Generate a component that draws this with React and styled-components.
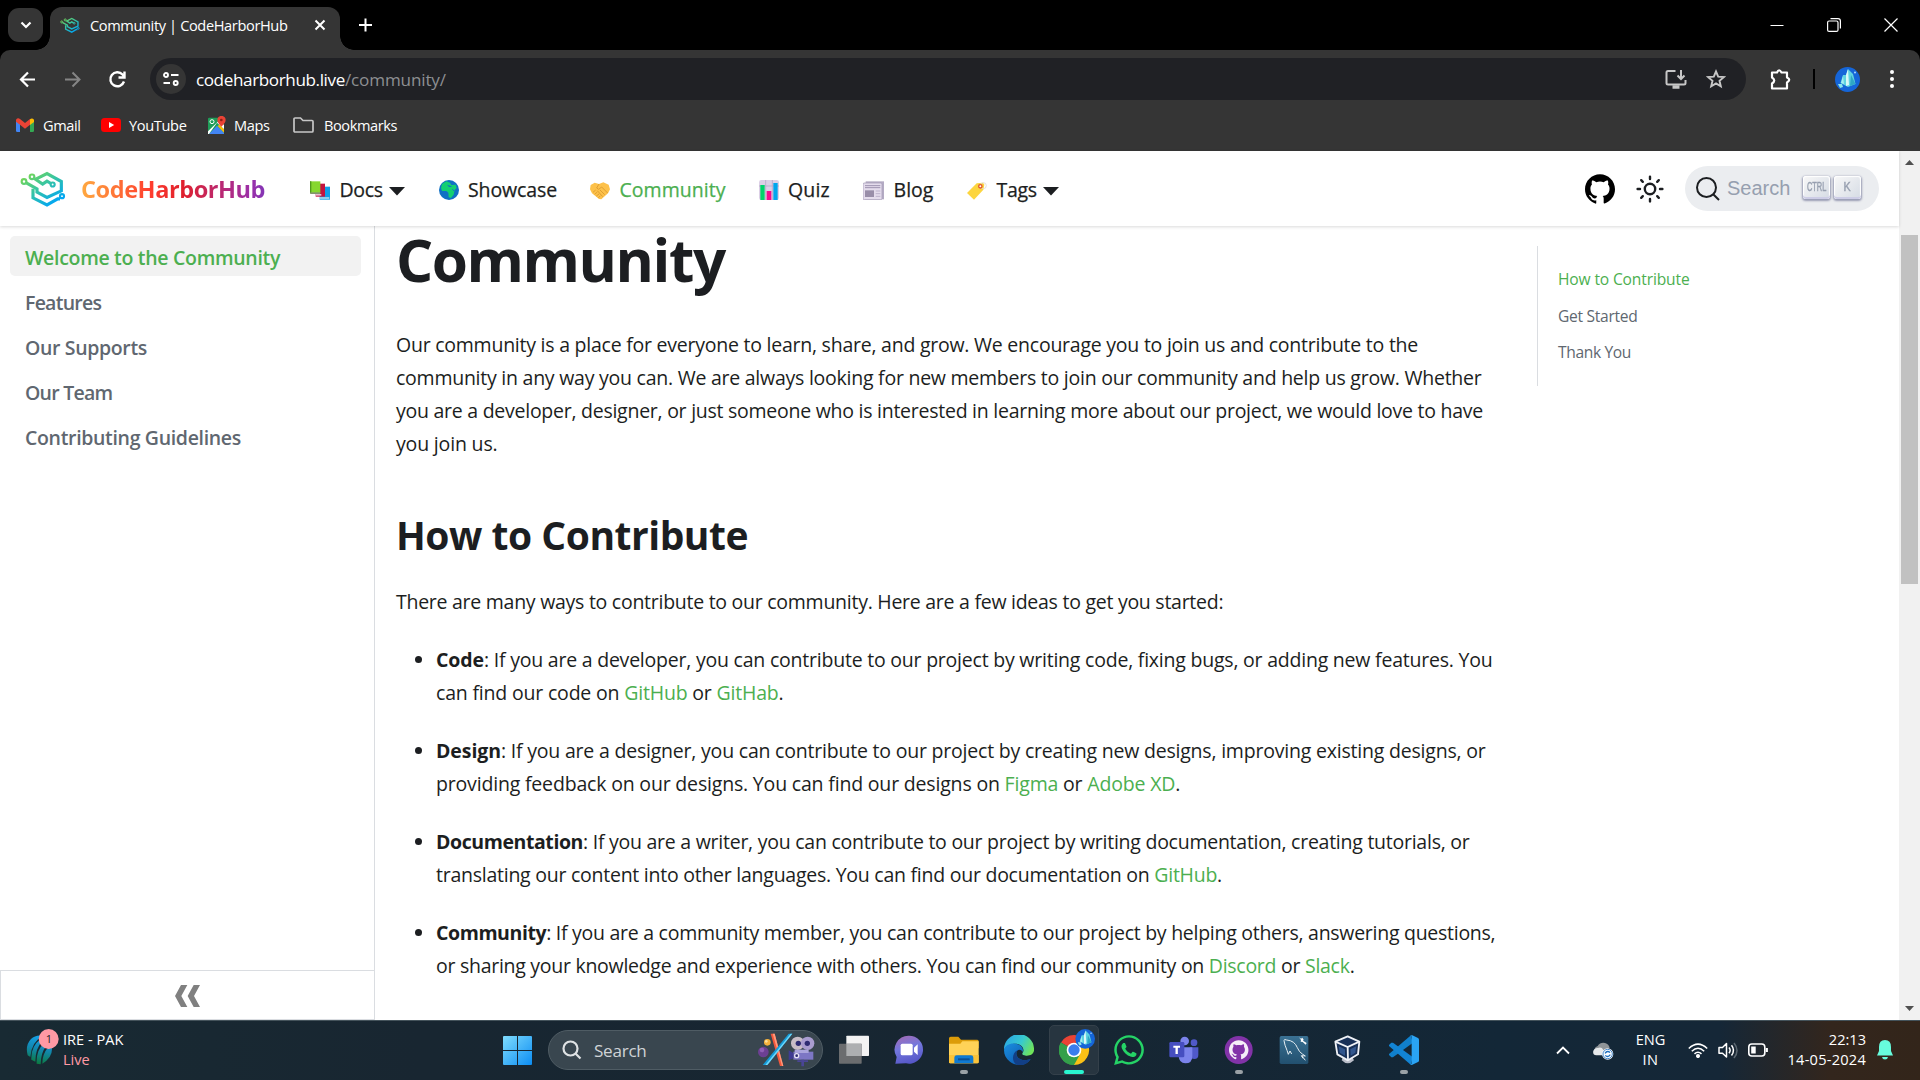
import React from 'react';
import styled, { createGlobalStyle } from 'styled-components';
import { FaWhatsapp } from 'react-icons/fa';

const GlobalStyle = createGlobalStyle`
  * { box-sizing: border-box; }
  body {
    margin: 0;
    background: #fff;
    color: #1c1e21;
    font-family: "Open Sans", "Noto Sans", sans-serif;
    overflow: hidden;
  }
  svg { display: block; flex: none; }
`;

/* ---------- shared ---------- */

const Text = styled.span`
  white-space: nowrap;
  letter-spacing: ${p => p.$ls || 0}px;
`;

const Screen = styled.div`
  width: 1920px;
  height: 1080px;
  display: flex;
  flex-direction: column;
  overflow: hidden;
`;

/* ---------- browser window ---------- */

const TabStrip = styled.div`
  height: 50px;
  flex: none;
  background: #000;
  display: flex;
  align-items: flex-start;
  padding-left: 8px;
`;

const TabSearch = styled.div`
  width: 35px;
  height: 34px;
  margin-top: 8px;
  border-radius: 11px;
  background: #353535;
  display: flex;
  align-items: center;
  justify-content: center;
`;

const Tab = styled.div`
  position: relative;
  width: 290px;
  height: 43px;
  margin: 7px 0 0 7px;
  padding: 0 14px 8px 10px;
  border-radius: 12px 12px 0 0;
  background: #353535;
  color: #fff;
  font-size: 14.6px;
  display: flex;
  align-items: center;
  gap: 10px;

  &::before,
  &::after {
    content: "";
    position: absolute;
    bottom: 0;
    width: 14px;
    height: 14px;
  }
  &::before {
    right: 100%;
    background: radial-gradient(circle at 0 0, transparent 13.5px, #353535 14px);
  }
  &::after {
    left: 100%;
    background: radial-gradient(circle at 100% 0, transparent 13.5px, #353535 14px);
  }
`;

const TabTitle = styled(Text)`
  flex: 1;
`;

const NewTab = styled.div`
  width: 51px;
  height: 50px;
  display: flex;
  align-items: center;
  justify-content: center;
`;

const WindowButtons = styled.div`
  margin-left: auto;
  padding-right: 1px;
  height: 49px;
  display: flex;
`;

const WindowButton = styled.div`
  width: 57px;
  display: flex;
  align-items: center;
  justify-content: center;
`;

const ToolbarBackdrop = styled.div`
  flex: none;
  background: #000;
`;

const Toolbar = styled.div`
  height: 101px;
  border-radius: 10px 10px 0 0;
  background: #353535;
  color: #fff;
`;

const AddressRow = styled.div`
  height: 58px;
  padding: 0 18px 0 17px;
  display: flex;
  align-items: center;
`;

const NavButtons = styled.div`
  width: 133px;
  display: flex;
  gap: 24px;
`;

const AddressBar = styled.div`
  width: 1597px;
  height: 42px;
  padding: 0 20px 0 6px;
  border-radius: 21px;
  background: #202125;
  font-size: 17.1px;
  display: flex;
  align-items: center;
`;

const SiteInfo = styled.div`
  width: 30px;
  height: 30px;
  margin-right: 10px;
  border-radius: 50%;
  background: #353535;
  display: flex;
  align-items: center;
  justify-content: center;
`;

const UrlPath = styled(Text)`
  flex: 1;
  color: #8d8f92;
`;

const AddressActions = styled.div`
  display: flex;
  gap: 19px;
`;

const BrowserActions = styled.div`
  flex: 1;
  padding-left: 23px;
  display: flex;
  align-items: center;
`;

const Separator = styled.div`
  width: 2px;
  height: 20px;
  margin: 0 20px 0 21px;
  background: #000;
`;

const BookmarkBar = styled.div`
  height: 34px;
  padding-left: 16px;
  font-size: 14.6px;
  display: flex;
  align-items: center;
`;

const Bookmark = styled.div`
  width: ${p => p.$w}px;
  display: flex;
  align-items: center;
  gap: ${p => p.$gap || 8}px;
`;

/* ---------- page ---------- */

const Page = styled.div`
  height: 869px;
  flex: none;
  display: flex;
`;

const Site = styled.div`
  width: 1899px;
  display: flex;
  flex-direction: column;
`;

const Navbar = styled.header`
  position: relative;
  z-index: 1;
  height: 75px;
  flex: none;
  padding: 0 20px;
  background: #fff;
  box-shadow: 0 1px 3px rgba(0, 0, 0, 0.15);
  display: flex;
  align-items: center;
`;

const Brand = styled.div`
  width: 290px;
  display: flex;
  align-items: center;
  gap: 15px;
`;

const BrandName = styled(Text)`
  margin-top: 1px;
  font-size: 23.5px;
  font-weight: 700;
  line-height: 34px;
  color: transparent;
  background: linear-gradient(90deg, #ffaa40, #ff3d2e 38%, #e0202c 55%, #9c2fa8 92%, #8335b5);
  background-clip: text;
  -webkit-background-clip: text;
`;

const NavLinks = styled.nav`
  display: flex;
  gap: 33.5px;
`;

const NavLink = styled.a`
  width: ${p => p.$w}px;
  padding-top: 2px;
  color: ${p => (p.$active ? '#4caf50' : '#1c1e21')};
  font-size: 19.5px;
  line-height: 33px;
  -webkit-text-stroke: 0.25px currentColor;
  display: flex;
  align-items: center;
  gap: 9.5px;
`;

const NavEnd = styled.div`
  margin-left: auto;
  display: flex;
  align-items: center;
`;

const SearchButton = styled.div`
  width: 194px;
  height: 45px;
  margin-left: 21px;
  padding: 0 17px 0 11px;
  border-radius: 23px;
  background: #ebedf0;
  color: #969faf;
  font: 20px "Liberation Sans", sans-serif;
  display: flex;
  align-items: center;
`;

const SearchLabel = styled(Text)`
  flex: 1;
  padding-left: 7px;
`;

const Key = styled.kbd`
  width: 27px;
  height: 23px;
  margin: 0 1px 2px 3px;
  padding-bottom: 1px;
  border-radius: 3px;
  background: linear-gradient(-45deg, #d5dbe4, #f8f8f8);
  box-shadow: inset 0 -2px 0 0 #cdcde6, inset 0 0 1px 1px #fff, 0 1px 2px 1px rgba(30, 35, 90, 0.4);
  color: #969faf;
  font: ${p => (p.$small ? '12px' : '12px')} "Liberation Sans", sans-serif;
  -webkit-text-stroke: 0.4px currentColor;
  display: flex;
  align-items: center;
  justify-content: center;
`;

const KeyText = styled.span`
  transform: scaleX(${p => (p.$narrow ? 0.62 : 0.9)});
`;

const Body = styled.div`
  flex: 1;
  min-height: 0;
  display: flex;
`;

const Sidebar = styled.aside`
  width: 375px;
  border-right: 1px solid #dadde1;
  display: flex;
  flex-direction: column;
`;

const Menu = styled.div`
  flex: 1;
  padding: 10px 13px 0 10px;
  display: flex;
  flex-direction: column;
  gap: 5px;
`;

const MenuItem = styled.a`
  height: 40px;
  padding: 3px 15px 0;
  border-radius: 5px;
  background: ${p => (p.$active ? '#f2f2f2' : 'transparent')};
  color: ${p => (p.$active ? '#4caf50' : '#606770')};
  font-size: 19.5px;
  font-weight: 600;
  display: flex;
  align-items: center;
`;

const CollapseButton = styled.div`
  height: 50px;
  padding-top: 2px;
  border: 1px solid #dadde1;
  border-right: 0;
  display: flex;
  align-items: center;
  justify-content: center;
`;

const Article = styled.article`
  width: 1162px;
  padding-left: 21px;
  font-size: 19.5px;
  line-height: 33px;
`;

const Title = styled.h1`
  margin: 1px 0 0;
  font-size: 58.5px;
  line-height: 65px;
  letter-spacing: -1.45px;
`;

const Heading = styled.h2`
  margin: 50px 0 0;
  font-size: 39px;
  line-height: 50px;
  letter-spacing: -0.48px;
`;

const Paragraph = styled.p`
  margin: ${p => p.$top}px 0 0;
`;

const Line = styled(Text)`
  display: block;
`;

const List = styled.ul`
  margin: 25px 0 0;
  padding-left: 40px;
  display: flex;
  flex-direction: column;
  gap: 25px;
`;

const Bold = styled.strong`
  letter-spacing: ${p => p.$ls}px;
`;

const Link = styled.a`
  color: #4caf50;
`;

const Toc = styled.ul`
  width: 340px;
  height: 140px;
  margin: 20px 0 0;
  padding: 18px 0 0 20px;
  border-left: 1px solid #dadde1;
  list-style: none;
  color: #606770;
  font-size: 15.6px;
`;

const TocItem = styled.li`
  height: 36.5px;
  line-height: 30px;
  color: ${p => (p.$active ? '#4caf50' : 'inherit')};
`;

const Scrollbar = styled.div`
  width: 21px;
  padding: 9px 2px 9px;
  background: #f1f1f1;
  display: flex;
  flex-direction: column;
  align-items: center;
`;

const Thumb = styled.div`
  width: 17px;
  height: 349px;
  margin: 70px 0 auto;
  background: #c1c1c1;
`;

/* ---------- taskbar ---------- */

const Taskbar = styled.footer`
  height: 60px;
  flex: none;
  border-top: 1px solid #44535b;
  background: linear-gradient(90deg, #182a33 0, #182631 420px, #172632 1000px, #132737 1500px, #152737 1720px, #33261d 1830px, #33251a 1920px);
  color: #fff;
  font-size: 14.6px;
  line-height: 20px;
  display: flex;
`;

const Widget = styled.div`
  width: 500px;
  padding: 8px 0 0 26px;
  display: flex;
  gap: 4px;
`;

const Stack = styled.div`
  width: ${p => p.$w}px;
  display: flex;
  flex-direction: column;
  align-items: ${p => p.$align || 'flex-start'};
`;

const Live = styled(Text)`
  color: #ff99a4;
`;

const TaskSearch = styled.div`
  width: 275px;
  height: 40px;
  margin: 9px 4px 0 13px;
  padding: 0 7px 0 13px;
  border: 1px solid #4f5c64;
  border-radius: 20px;
  background: #39464f;
  color: #cfd3d6;
  font-size: 17.1px;
  display: flex;
  align-items: center;
`;

const TaskSearchLabel = styled(Text)`
  flex: 1;
  padding: 1px 0 0 12px;
`;

const StartButton = styled.div`
  width: 35px;
  padding: 15px 0 0 3px;
`;

const AppButton = styled.div`
  width: 50px;
  height: 50px;
  margin: 4px 0 0 ${p => (p.$first ? 2 : 5)}px;
  padding-top: 9px;
  border-radius: 5px;
  border: 1px solid ${p => (p.$active ? '#34404a' : 'transparent')};
  background: ${p => (p.$active ? '#273540' : 'transparent')};
  display: flex;
  flex-direction: column;
  align-items: center;
  justify-content: space-between;
`;

const IconSlot = styled.div`
  height: 30px;
  margin-left: ${p => (p.$wide ? 6 : 0)}px;
  display: flex;
  align-items: flex-end;
`;

const Indicator = styled.div`
  width: ${p => (p.$active ? 20 : 8)}px;
  height: 4px;
  border-radius: 2px;
  background: ${p => (p.$active ? '#29f5cf' : p.$open ? '#9aa1a6' : 'transparent')};
`;

const Tray = styled.div`
  margin-left: auto;
  padding: 8px 27px 0 0;
  display: flex;
`;

const TrayIcon = styled.div`
  width: ${p => p.$w}px;
  height: 42px;
  margin-left: ${p => p.$left || 0}px;
  display: flex;
  align-items: center;
`;

/* ---------- drawings ---------- */

const LogoMark = ({ width, height, id }) => (
  <svg width={width} height={height} viewBox="60 511 138 110" fill="none">
    <defs>
      <linearGradient id={id} gradientUnits="userSpaceOnUse" x1="80" y1="515" x2="150" y2="620">
        <stop offset="0" stopColor="#7fd84a" />
        <stop offset=".45" stopColor="#3cc79c" />
        <stop offset="1" stopColor="#00a6f5" />
      </linearGradient>
    </defs>
    <g stroke={`url(#${id})`} strokeWidth="9.5" strokeLinejoin="miter">
      <path d="M109 537 L141 521 L184 545 V573 L141 593 L111 577 V567 L79 549" />
      <path d="M103 536 L128 553 L141 544 L153 551" />
      <path d="M99 567 V594 L141 615 L173 597 H180" />
      <circle cx="72" cy="545" r="7" strokeWidth="6.500" />
      <circle cx="96" cy="531" r="7" strokeWidth="6.500" />
      <circle cx="158" cy="554" r="6" strokeWidth="6.500" />
      <circle cx="186" cy="589" r="6" strokeWidth="6.500" />
    </g>
  </svg>
);

const CrystalShapes = () => (
  <>
    <circle cx="12.5" cy="12.5" r="12.5" fill="#1565d8" />
    <path d="M13 2 L18 7 L20.5 17 L13 20 L5.5 16 L8 8 L11 8 Z" fill="#5fd3e0" />
    <path d="M13 2 L14 18 L11 19 L11 8 Z" fill="#d9f8f8" />
    <path d="M16 8 L20.5 17 L15 19 Z" fill="#2fa7c4" />
    <path d="M8 9 L9 17 L6 16 Z" fill="#a7eef0" />
    <path d="M3 17 L7 17 L8 20 L5 21 Z" fill="#8be6ea" />
    <circle cx="20" cy="5.5" r="1" fill="#a9d8ff" />
  </>
);

const Crystal = ({ size }) => (
  <svg width={size} height={size} viewBox="0 0 25 25"><CrystalShapes /></svg>
);

const CaretSvg = styled.svg`
  margin: 3px 0 0 -3.5px;
`;

const Caret = () => (
  <CaretSvg width="16" height="9" viewBox="0 0 16 9"><path d="M0 0 H16 L8 8.5 Z" fill="#1c1e21" /></CaretSvg>
);

const BooksIcon = () => (
  <svg width="20" height="20" viewBox="0 0 60 60">
    <path d="M29 20 H60 V59 H29 Z" fill="#0f9fe8" /><path d="M29 52 H58 V56 H29 Z" fill="#cfe6f2" />
    <path d="M17 11 H45 V50 H17 Z" fill="#c2143f" /><path d="M17 42 H34 V47 H17 Z" fill="#e3bfd0" />
    <path d="M0 4 H31 V40 H0 Z" fill="#86d72f" /><path d="M0 4 H4 V40 H0 Z" fill="#4f9a1c" /><path d="M1 37 H30 V42 H1 Z" fill="#83936f" />
  </svg>
);

const GlobeIcon = () => (
  <svg width="20" height="20" viewBox="0 0 60 60">
    <circle cx="30" cy="30" r="30" fill="#0f70c4" />
    <path d="M9 12 L22 4 L33 8 L37 15 L50 14 L53 24 L47 30 L44 44 L36 54 L29 52 L28 38 L22 33 L9 33 L6 24 Z" fill="#12cf72" />
    <path d="M24 14 L33 17 L40 21 L30 21 Z" fill="#0f70c4" /><path d="M40 28 L46 33" stroke="#0f70c4" strokeWidth="3" />
  </svg>
);

const HandshakeIcon = () => (
  <svg width="20" height="20" viewBox="0 0 60 60">
    <path d="M2 15 L14 8 L27 12 L40 7 L56 14 L60 28 L54 40 L34 58 L27 57 L6 40 L0 28 Z" fill="#fdc14a" />
    <path d="M27 12 L20 24 L26 28 L35 21 L53 39 M30 30 L44 44 M22 32 L38 50 M9 37 L17 30 M14 43 L22 36 M19 48 L27 42 M25 53 L31 48" stroke="#d9982c" strokeWidth="2.500" fill="none" />
  </svg>
);

const ChartIcon = () => (
  <svg width="20" height="20" viewBox="0 0 60 60">
    <rect width="60" height="60" rx="7" fill="#dccfe6" />
    <path d="M20 0 V60 M40 0 V60 M0 18 H60" stroke="#b7a8c6" strokeWidth="2.5" />
    <rect x="4" y="15" width="13" height="45" fill="#00d26a" /><rect x="23" y="33" width="14" height="27" fill="#f70a8d" /><rect x="43" y="9" width="13" height="51" fill="#00a6ed" />
  </svg>
);

const NewsIcon = () => (
  <svg width="21" height="20" viewBox="0 0 63 60">
    <path d="M8 4 H63 V58 H8 Z" fill="#b4abc4" />
    <rect y="9" width="57" height="50" rx="4" fill="#e4dcec" stroke="#aaa0bb" strokeWidth="2.5" />
    <path d="M6 17 H52 M6 23 H52" stroke="#9d91b0" strokeWidth="3" /><rect x="6" y="31" width="27" height="20" fill="#998ea9" />
    <path d="M38 33 H52 M38 41 H52 M38 49 H52" stroke="#bdb2cc" strokeWidth="3" />
  </svg>
);

const TagIcon = () => (
  <svg width="20" height="20" viewBox="0 0 60 60">
    <path d="M0 39 L29 10 L48 8 L52 14 L49 29 L21 59 Z" fill="#fcd53f" />
    <circle cx="49" cy="17" r="9" fill="none" stroke="#dedbd4" strokeWidth="2.5" />
    <circle cx="40" cy="19" r="5" fill="#fff" stroke="#e2572b" strokeWidth="4" />
  </svg>
);

const githubPath = 'M12 .297c-6.63 0-12 5.373-12 12 0 5.303 3.438 9.8 8.205 11.385.6.113.82-.258.82-.577 0-.285-.01-1.04-.015-2.04-3.338.724-4.042-1.61-4.042-1.61C4.422 18.07 3.633 17.7 3.633 17.7c-1.087-.744.084-.729.084-.729 1.205.084 1.838 1.236 1.838 1.236 1.07 1.835 2.809 1.305 3.495.998.108-.776.417-1.305.76-1.605-2.665-.3-5.466-1.332-5.466-5.93 0-1.31.465-2.38 1.235-3.22-.135-.303-.54-1.523.105-3.176 0 0 1.005-.322 3.3 1.23.96-.267 1.98-.399 3-.405 1.02.006 2.04.138 3 .405 2.28-1.552 3.285-1.23 3.285-1.23.645 1.653.24 2.873.12 3.176.765.84 1.23 1.91 1.23 3.22 0 4.61-2.805 5.625-5.475 5.92.42.36.81 1.096.81 2.22 0 1.606-.015 2.896-.015 3.286 0 .315.21.69.825.57C20.565 22.092 24 17.592 24 12.297c0-6.627-5.373-12-12-12';

const GithubMark = () => (
  <svg width="30" height="30" viewBox="0 0 24 24"><path d={githubPath} fill="#000" /></svg>
);

const SunSvg = styled.svg`
  margin-left: 21px;
`;

const SunIcon = () => (
  <SunSvg width="28" height="28" viewBox="0 0 28 28" fill="none" stroke="#1c1e21" strokeWidth="2.4" strokeLinecap="round">
    <circle cx="14" cy="14" r="5.2" />
    <path d="M14 1.6V4M14 24v2.4M1.6 14H4M24 14h2.4M5.2 5.2l1.6 1.6M21.2 21.2l1.6 1.6M22.8 5.2l-1.6 1.6M6.8 21.2l-1.6 1.6" />
  </SunSvg>
);

const GmailIcon = () => (
  <svg width="18" height="14" viewBox="0 0 54 42">
    <path d="M0 6 L12 15 V42 H4 Q0 42 0 38Z" fill="#4285f4" /><path d="M54 6 L42 15 V42 H50 Q54 42 54 38Z" fill="#34a853" />
    <path d="M42 4 Q48 -2 54 5 V12 L42 21Z" fill="#fbbc04" /><path d="M0 5 Q5 -2 12 3 L27 15 L42 3 V20 L27 32 L12 20 L0 11Z" fill="#ea4335" />
  </svg>
);

const YouTubeIcon = () => (
  <svg width="20" height="14" viewBox="0 0 20 14"><rect width="20" height="14" rx="3.5" fill="#f00" /><path d="M8 4 L13.2 7 L8 10Z" fill="#fff" /></svg>
);

const MapsIcon = () => (
  <svg width="19" height="18" viewBox="0 0 57 54">
    <rect y="5" width="48" height="49" rx="4" fill="#1f9d58" /><path d="M3 54 L27 29 L48 50 V54Z" fill="#4285f4" /><path d="M0 46 L34 13 L48 27 V40 L27 20 L3 54H0Z" fill="#fff" />
    <path d="M34 26 L48 40 V50 L29 30Z" fill="#fbbc04" /><circle cx="12" cy="17" r="6" fill="none" stroke="#fff" strokeWidth="3" />
    <path d="M40 32 Q28 20 28 12 A12 12 0 0 1 53 12 Q53 20 40 32Z" fill="#ea4335" /><circle cx="40" cy="12" r="4" fill="#8d1f17" />
  </svg>
);

const WinStart = () => (
  <svg width="29" height="29" viewBox="0 0 29 29">
    <defs><linearGradient id="win" gradientUnits="userSpaceOnUse" x1="0" y1="0" x2="29" y2="29"><stop offset="0" stopColor="#7fdcfd" /><stop offset="1" stopColor="#0c8df3" /></linearGradient></defs>
    <path d="M1 0H14V14H0V1Q0 0 1 0ZM15 0H28Q29 0 29 1V14H15ZM0 15H14V29H1Q0 29 0 28ZM15 15H29V28Q29 29 28 29H15Z" fill="url(#win)" />
  </svg>
);

const SearchArt = () => (
  <svg width="57" height="34" viewBox="0 0 171 102">
    <path d="M38 2 L50 2 L76 99 L66 99Z" fill="#f4583c" /><path d="M44 2 L50 2 L76 99 L72 99Z" fill="#ff9a7c" />
    <path d="M92 2 L103 2 L28 96 L14 96Z" fill="#159bd8" /><path d="M98 2 L103 2 L28 96 L22 96Z" fill="#6fd8fa" />
    <circle cx="28" cy="28" r="10" fill="#f5b13c" /><circle cx="25" cy="25" r="4" fill="#ffe09a" /><circle cx="16" cy="57" r="16" fill="#6c3f93" /><circle cx="12" cy="51" r="7" fill="#8f5fb5" />
    <circle cx="119" cy="31" r="20" fill="#c8bcc6" /><circle cx="149" cy="31" r="20" fill="#a99ccf" />
    <circle cx="121" cy="31" r="8" fill="#2e2b72" /><circle cx="148" cy="31" r="8" fill="#2e2b72" />
    <path d="M106 56 H166 V80 H106Z" fill="#7d76c4" /><path d="M110 50 H152 V60 H110Z" fill="#aaa4dc" /><path d="M92 52 L106 60 V76 L92 82Z" fill="#3f3b92" /><circle cx="116" cy="68" r="8" fill="#e6e4f5" /><circle cx="116" cy="68" r="4" fill="#2e2b72" />
    <path d="M130 80 H138 V100 H130Z M118 82 H150 V87 H118Z" fill="#4a4596" />
  </svg>
);

const TaskViewIcon = () => (
  <svg width="30" height="30" viewBox="0 0 90 90"><rect x="22" y="2" width="68" height="61" rx="2" fill="#f3f3f3" /><rect y="26" width="68" height="60" rx="2" fill="#6b6d6f" /><path d="M22 26H68V63H22Z" fill="#adafb1" /></svg>
);

const ChatIcon = () => (
  <svg width="30" height="30" viewBox="0 0 90 90">
    <defs><linearGradient id="chat" x1="0.2" y1="0" x2="0.5" y2="1"><stop offset="0" stopColor="#a26bb5" /><stop offset=".45" stopColor="#7377dd" /><stop offset="1" stopColor="#5657c8" /></linearGradient></defs>
    <path d="M45 2 A42 42 0 1 1 36 85 L4 86 L8 66 A42 42 0 0 1 45 2Z" fill="url(#chat)" /><rect x="20" y="26" width="36" height="35" rx="5" fill="#fff" /><path d="M60 38 L71 28 V60 L60 50Z" fill="#fff" />
  </svg>
);

const FolderIcon = () => (
  <svg width="30" height="30" viewBox="0 0 90 90">
    <path d="M0 10 Q0 5 5 5 H28 L36 14 H85 Q89 14 89 19 V40 H0Z" fill="#dc9c09" /><path d="M0 26 H34 L40 19 H89 V81 Q89 85 85 85 H4 Q0 85 0 81Z" fill="#ffd257" /><path d="M0 60H89V81Q89 85 85 85H4Q0 85 0 81Z" fill="#fbc339" />
    <path d="M16 85 V68 Q16 61 23 61 H66 Q73 61 73 68 V85Z" fill="#0f7ad3" /><path d="M27 70H62V76H27Z" fill="#0a4f96" />
  </svg>
);

const EdgeIcon = () => (
  <svg width="30" height="30" viewBox="0 0 90 90">
    <defs>
      <linearGradient id="edgeTop" x1="0" y1=".2" x2="1" y2=".6"><stop offset="0" stopColor="#2aa5e4" /><stop offset=".55" stopColor="#37c9d0" /><stop offset="1" stopColor="#6fe35a" /></linearGradient>
      <linearGradient id="edgeBottom" x1="0" y1="0" x2="1" y2="1"><stop offset="0" stopColor="#1a8fe0" /><stop offset="1" stopColor="#0c4fa5" /></linearGradient>
    </defs>
    <path d="M0 45 A45 45 0 0 1 90 40 C92 56 80 63 66 62 C54 61 53 57 57 52 C62 42 54 27 36 26 C18 26 4 34 0 45Z" fill="url(#edgeTop)" />
    <path d="M0 45 C4 30 18 24 34 26 C52 28 60 42 56 51 C50 40 37 44 37 56 C38 74 62 80 80 72 C68 94 38 95 18 80 C6 71 0 60 0 45Z" fill="url(#edgeBottom)" />
    <path d="M37 56 C38 74 62 80 80 72 C68 92 44 94 36 88 C22 78 24 50 44 44 C39 47 37 51 37 56Z" fill="#123f86" />
  </svg>
);

const ChromeIcon = () => (
  <svg width="36" height="36" viewBox="0 0 108 108">
    <path d="M45 63 L6 40.500 A45 45 0 0 1 84 40.500 Z" fill="#ea4335" />
    <path d="M45 63 L84 40.500 A45 45 0 0 1 45 108Z" fill="#fbc116" /><path d="M45 63 L45 108 A45 45 0 0 1 6 40.500Z" fill="#34a04a" /><path d="M45 43H84L90 63L60 76Z" fill="#fbc116" />
    <path d="M6 40 L25 74 L45 84 L62 78 L45 108 A45 45 0 0 1 6 40Z" fill="#34a04a" />
    <circle cx="45" cy="63" r="22" fill="#fff" /><circle cx="45" cy="63" r="17" fill="#3b7ded" />
    <g transform="translate(49 0) scale(2.360)"><CrystalShapes /></g>
  </svg>
);

const WhatsappMark = styled(FaWhatsapp)`
  margin: -2px;
  color: #25d366;
`;

const WhatsappIcon = () => <WhatsappMark size={34} />;

const TeamsIcon = () => (
  <svg width="30" height="30" viewBox="0 0 90 90">
    <circle cx="75" cy="23" r="10" fill="#5059c9" /><path d="M62 37H88V60Q88 72 76 72Q66 72 62 66Z" fill="#5059c9" />
    <circle cx="47" cy="18" r="13" fill="#7b83eb" /><path d="M30 37H70V62Q70 85 49 85Q30 84 29 64Z" fill="#7b83eb" />
    <rect x="1" y="21" width="45" height="46" rx="4" fill="#464ec0" /><path d="M13 32H33V38H26.500V57H19.500V38H13Z" fill="#fff" />
  </svg>
);

const GithubDesktopIcon = () => (
  <svg width="30" height="30" viewBox="0 0 90 90"><circle cx="44" cy="45" r="42" fill="#8233a8" /><g transform="translate(15 15) scale(2.430)"><path d={githubPath} fill="#f5eef8" /></g></svg>
);

const MysqlIcon = () => (
  <svg width="30" height="30" viewBox="0 0 90 90">
    <defs><linearGradient id="sql" x1="0" y1="0" x2="0" y2="1"><stop offset="0" stopColor="#3a7193" /><stop offset="1" stopColor="#22506f" /></linearGradient></defs>
    <rect x="2" y="3" width="86" height="84" rx="5" fill="url(#sql)" />
    <path d="M28 58 L24 46 Q17 30 15 17 Q15 11 23 15 Q47 17 55 38 Q61 52 70 57 L79 63 L68 62 L79 76 M28 58 L33 48 L38 57 M67 62 L72 70" stroke="#e8f0f4" strokeWidth="3" fill="none" />
    <path d="M60 7 L66 11 L70 8 L74 14 L72 17 L83 24 L80 29 L71 21 L65 20 L66 15Z" fill="#fff" />
  </svg>
);

const CubeIcon = () => (
  <svg width="30" height="30" viewBox="4 0 90 90">
    <path d="M27 76 Q45 94 64 76 L60 68 H30Z" fill="#b9bdc8" />
    <path d="M45 4 L80 20 L76 58 L46 76 L14 58 L8 20Z" fill="#173057" stroke="#eef1f6" strokeWidth="5.500" strokeLinejoin="round" />
    <path d="M8 20 L45 36 L80 20 M45 36 L46 76" stroke="#eef1f6" strokeWidth="5.500" fill="none" /><path d="M18 34L37 43V62L21 53Z M53 43L71 34L68 53L54 62Z" fill="#31568d" />
  </svg>
);

const CodeIcon = () => (
  <svg width="30" height="30" viewBox="0 0 90 90">
    <path d="M66 1 L71 24 L12 67 L7 67 L0 60 V57Z" fill="#1080cc" /><path d="M7 23 L12 23 L71 66 L66 90 L0 33 V30Z" fill="#1284d4" />
    <path d="M64 2 Q67 0 70 1 L87 9 Q90 11 90 14 V77 Q90 80 87 81 L70 89 Q67 91 64 88 Q68 89 68 84 V7 Q68 1 64 2Z" fill="#2aa4f4" />
  </svg>
);

const SportsIcon = () => (
  <svg width="33" height="38" viewBox="0 0 99 114">
    <defs><linearGradient id="ball" x1="0.6" y1="0" x2="0.4" y2="1"><stop offset="0" stopColor="#15a4ec" /><stop offset=".45" stopColor="#1288b4" /><stop offset="1" stopColor="#0b7a3b" /></linearGradient></defs>
    <path d="M5 79 Q-3 49 15 30 Q28 17 50 20 Q16 39 13 84Z M16 92 Q14 52 44 30 L50 36 Q28 57 28 98Z M32 104 Q30 62 54 44 L61 50 Q44 72 44 106Z M49 104 Q49 75 67 54 L78 56 Q80 86 49 104Z" fill="url(#ball)" />
    <circle cx="68" cy="30" r="30" fill="#ff99a4" />
    <text x="69" y="41" textAnchor="middle" fontSize="33" fontFamily="Open Sans, sans-serif" fill="#232329">1</text>
  </svg>
);

const stroke = { fill: 'none', stroke: '#fff', strokeWidth: 2 };

/* ---------- content ---------- */

const navItems = [
  { label: 'Docs', icon: BooksIcon, w: 95, ls: -0.3, caret: true },
  { label: 'Showcase', icon: GlobeIcon, w: 118, ls: -0.1 },
  { label: 'Community', icon: HandshakeIcon, w: 135, ls: 0.035, active: true },
  { label: 'Quiz', icon: ChartIcon, w: 71, ls: 0.15 },
  { label: 'Blog', icon: NewsIcon, w: 70.5, ls: 0.04 },
  { label: 'Tags', icon: TagIcon, w: 91.5, ls: -0.3, caret: true },
];

const menuItems = [
  { label: 'Welcome to the Community', ls: -0.31, active: true },
  { label: 'Features', ls: -0.75 },
  { label: 'Our Supports', ls: -0.35 },
  { label: 'Our Team', ls: -0.75 },
  { label: 'Contributing Guidelines', ls: -0.33 },
];

const intro = [
  ['Our community is a place for everyone to learn, share, and grow. We encourage you to join us and contribute to the', -0.239],
  ['community in any way you can. We are always looking for new members to join our community and help us grow. Whether', -0.245],
  ['you are a developer, designer, or just someone who is interested in learning more about our project, we would love to have', -0.257],
  ['you join us.', -0.167],
];

const ideas = [
  {
    name: 'Code', nameLs: -0.1, ls: [-0.22, -0.187],
    first: ': If you are a developer, you can contribute to our project by writing code, fixing bugs, or adding new features. You',
    second: <>can find our code on <Link>GitHub</Link> or <Link>GitHab</Link>.</>,
  },
  {
    name: 'Design', nameLs: -0.07, ls: [-0.206, -0.18],
    first: ': If you are a designer, you can contribute to our project by creating new designs, improving existing designs, or',
    second: <>providing feedback on our designs. You can find our designs on <Link>Figma</Link> or <Link>Adobe XD</Link>.</>,
  },
  {
    name: 'Documentation', nameLs: -0.415, ls: [-0.251, -0.251],
    first: ': If you are a writer, you can contribute to our project by writing documentation, creating tutorials, or',
    second: <>translating our content into other languages. You can find our documentation on <Link>GitHub</Link>.</>,
  },
  {
    name: 'Community', nameLs: -0.42, ls: [-0.27, -0.275],
    first: ': If you are a community member, you can contribute to our project by helping others, answering questions,',
    second: <>or sharing your knowledge and experience with others. You can find our community on <Link>Discord</Link> or <Link>Slack</Link>.</>,
  },
];

const apps = [
  { name: 'taskview', icon: TaskViewIcon },
  { name: 'chat', icon: ChatIcon },
  { name: 'files', icon: FolderIcon, open: true },
  { name: 'edge', icon: EdgeIcon },
  { name: 'chrome', icon: ChromeIcon, active: true },
  { name: 'whatsapp', icon: WhatsappIcon },
  { name: 'teams', icon: TeamsIcon },
  { name: 'github', icon: GithubDesktopIcon, open: true },
  { name: 'mysql', icon: MysqlIcon },
  { name: 'virtualbox', icon: CubeIcon },
  { name: 'vscode', icon: CodeIcon, open: true },
];

const Browser = () => (
  <>
    <TabStrip>
      <TabSearch><svg width="12" height="8" viewBox="0 0 12 8" {...stroke} strokeWidth="2.2"><path d="M1.500 1.500 L6 6 L10.500 1.500" /></svg></TabSearch>
      <Tab>
        <LogoMark width={20} height={18} id="tabLogo" />
        <TabTitle $ls={-0.378}>Community | CodeHarborHub</TabTitle>
        <svg width="12" height="12" viewBox="0 0 12 12" {...stroke}><path d="M1.500 1.500 L10.500 10.500 M10.500 1.500 L1.500 10.500" /></svg>
      </Tab>
      <NewTab><svg width="13" height="14" viewBox="0 0 13 14" {...stroke}><path d="M6.500 .5V13.500 M0 7H13" /></svg></NewTab>
      <WindowButtons>
        <WindowButton><svg width="14" height="14" viewBox="0 0 14 14" {...stroke} strokeWidth="1"><path d="M.5 7.500H13.500" /></svg></WindowButton>
        <WindowButton><svg width="14" height="14" viewBox="0 0 14 14" {...stroke} strokeWidth="1.200"><rect x=".6" y="3" width="10.400" height="10.400" rx="1.500" /><path d="M3.500 .7H11Q13.400 .7 13.400 3V10.500" /></svg></WindowButton>
        <WindowButton><svg width="14" height="14" viewBox="0 0 14 14" {...stroke} strokeWidth="1.200"><path d="M.5 .5L13.500 13.500M13.500 .5L.5 13.500" /></svg></WindowButton>
      </WindowButtons>
    </TabStrip>
    <ToolbarBackdrop>
      <Toolbar>
        <AddressRow>
          <NavButtons>
            <svg width="21" height="21" viewBox="0 0 21 21" {...stroke} strokeWidth="2.200"><path d="M18 10.500H4M11 3.500L4 10.500L11 17.500" /></svg>
            <svg width="21" height="21" viewBox="0 0 21 21" {...stroke} stroke="#858585"><path d="M3 10.500H17M10.500 3.500L17.500 10.500L10.500 17.500" /></svg>
            <svg width="21" height="21" viewBox="0 0 21 21" {...stroke} strokeWidth="2.400"><path d="M17 12.500A7 7 0 1 1 15.500 5.500L17.500 8M17.500 2.500V8.500H11.500" /></svg>
          </NavButtons>
          <AddressBar>
            <SiteInfo>
              <svg width="16" height="14" viewBox="0 0 16 14" {...stroke} strokeWidth="1.900"><circle cx="3" cy="3" r="2" /><path d="M8 3H15.500M.5 11H7" /><circle cx="12.700" cy="11" r="2" /></svg>
            </SiteInfo>
            <Text $ls={-0.384}>codeharborhub.live</Text>
            <UrlPath $ls={-0.146}>/community/</UrlPath>
            <AddressActions>
              <svg width="22" height="20" viewBox="0 0 22 20" fill="none" stroke="#c7c7c7" strokeWidth="2"><path d="M10.500 2H3Q1.500 2 1.500 3.500V14Q1.500 15.500 3 15.500H19Q20.500 15.500 20.500 14V11M16 1V9M12.500 6.500L16 10L19.500 6.500" /><path d="M7.500 18H14.500" strokeWidth="3.500" /></svg>
              <svg width="20" height="20" viewBox="0 0 20 20" fill="none" stroke="#c7c7c7" strokeWidth="1.900"><path d="M10 2.500L12.200 7.600L17.800 8.100L13.500 11.800L14.800 17.300L10 14.400L5.200 17.300L6.500 11.800L2.200 8.100L7.800 7.600Z" /></svg>
            </AddressActions>
          </AddressBar>
          <BrowserActions>
            <svg width="23" height="23" viewBox="0 0 23 23" {...stroke} strokeWidth="2.200"><path d="M3 4.500H8Q10 0 12.500 4.500H18V9.500Q22.500 11.500 18 14.500V20.500H3V15.500Q7.500 12.500 3 9.500Z" strokeLinejoin="round" /></svg>
            <Separator />
            <Crystal size={25} />
            <Kebab width="20" height="20" viewBox="0 0 20 20" fill="#fff"><circle cx="10" cy="3" r="2" /><circle cx="10" cy="10" r="2" /><circle cx="10" cy="17" r="2" /></Kebab>
          </BrowserActions>
        </AddressRow>
        <BookmarkBar>
          <Bookmark $w={85} $gap={9}><GmailIcon /><Text $ls={-0.42}>Gmail</Text></Bookmark>
          <Bookmark $w={107}><YouTubeIcon /><Text $ls={-0.36}>YouTube</Text></Bookmark>
          <Bookmark $w={85} $gap={7}><MapsIcon /><Text $ls={-0.41}>Maps</Text></Bookmark>
          <Bookmark $w={110} $gap={10}>
            <svg width="21" height="16" viewBox="0 0 21 16" fill="none" stroke="#c7c7c7" strokeWidth="1.700"><path d="M1 2Q1 1 2 1H7.500L10 3.500H19Q20 3.500 20 4.500V14Q20 15 19 15H2Q1 15 1 14Z" /></svg>
            <Text $ls={-0.43}>Bookmarks</Text>
          </Bookmark>
        </BookmarkBar>
      </Toolbar>
    </ToolbarBackdrop>
  </>
);

const Kebab = styled.svg`
  margin-left: 22px;
`;

export default function App() {
  return (
    <Screen>
      <GlobalStyle />
      <Browser />
      <Page>
        <Site>
          <Navbar>
            <Brand>
              <LogoMark width={46} height={37} id="brandLogo" />
              <BrandName $ls={-0.42}>CodeHarborHub</BrandName>
            </Brand>
            <NavLinks>
              {navItems.map(({ label, icon: Icon, w, ls, caret, active }) => (
                <NavLink key={label} $w={w} $active={active}>
                  <Icon /><Text $ls={ls}>{label}</Text>{caret && <Caret />}
                </NavLink>
              ))}
            </NavLinks>
            <NavEnd>
              <GithubMark />
              <SunIcon />
              <SearchButton>
                <svg width="24" height="24" viewBox="0 0 24 24" fill="none" stroke="#1c1e21" strokeWidth="2"><circle cx="10.500" cy="10.500" r="9.500" /><path d="M17.200 17.200L23 23" /></svg>
                <SearchLabel>Search</SearchLabel>
                <Key $small><KeyText $narrow>CTRL</KeyText></Key>
                <Key><KeyText>K</KeyText></Key>
              </SearchButton>
            </NavEnd>
          </Navbar>
          <Body>
            <Sidebar>
              <Menu>
                {menuItems.map(m => <MenuItem key={m.label} $active={m.active}><Text $ls={m.ls}>{m.label}</Text></MenuItem>)}
              </Menu>
              <CollapseButton>
                <svg width="25" height="22" viewBox="0 0 75 66" fill="#808080"><path d="M18 0H37L19 33L37 66H18L0 33Z M56 0H75L57 33L75 66H56L38 33Z" /></svg>
              </CollapseButton>
            </Sidebar>
            <Article>
              <Title>Community</Title>
              <Paragraph $top={35.5}>
                {intro.map(([line, ls]) => <Line key={line} $ls={ls}>{line}</Line>)}
              </Paragraph>
              <Heading>How to Contribute</Heading>
              <Paragraph $top={25}>
                <Line $ls={-0.265}>There are many ways to contribute to our community. Here are a few ideas to get you started:</Line>
              </Paragraph>
              <List>
                {ideas.map(i => (
                  <li key={i.name}>
                    <Line $ls={i.ls[0]}><Bold $ls={i.nameLs}>{i.name}</Bold>{i.first}</Line>
                    <Line $ls={i.ls[1]}>{i.second}</Line>
                  </li>
                ))}
              </List>
            </Article>
            <Toc>
              <TocItem $active><Text $ls={-0.15}>How to Contribute</Text></TocItem>
              <TocItem><Text $ls={-0.29}>Get Started</Text></TocItem>
              <TocItem><Text $ls={-0.36}>Thank You</Text></TocItem>
            </Toc>
          </Body>
        </Site>
        <Scrollbar>
          <svg width="9" height="5" viewBox="0 0 9 5"><path d="M0 5L4.500 0L9 5Z" fill="#505050" /></svg>
          <Thumb />
          <svg width="9" height="5" viewBox="0 0 9 5"><path d="M0 0L4.500 5L9 0Z" fill="#505050" /></svg>
        </Scrollbar>
      </Page>
      <Taskbar>
        <Widget>
          <SportsIcon />
          <Stack $w={70}><Text>IRE - PAK</Text><Live>Live</Live></Stack>
        </Widget>
        <StartButton><WinStart /></StartButton>
        <TaskSearch>
          <svg width="20" height="20" viewBox="0 0 20 20" fill="none" stroke="#dfe2e4" strokeWidth="2.200"><circle cx="8.500" cy="8.500" r="7" /><path d="M13.500 13.500L18.500 18.500" /></svg>
          <TaskSearchLabel $ls={-0.27}>Search</TaskSearchLabel>
          <SearchArt />
        </TaskSearch>
        {apps.map(({ name, icon: Icon, open, active }, i) => (
          <AppButton key={name} $first={i === 0} $active={active}>
            <IconSlot $wide={active}><Icon /></IconSlot>
            <Indicator $open={open} $active={active} />
          </AppButton>
        ))}
        <Tray>
          <TrayIcon $w={37}><svg width="14" height="9" viewBox="0 0 14 9" {...stroke} strokeWidth="1.800"><path d="M1 7.500L7 1.500L13 7.500" /></svg></TrayIcon>
          <TrayIcon $w={36}>
            <svg width="21" height="20" viewBox="0 -6 63 60">
              <path d="M14 12Q22 0 36 3Q48 6 50 18L22 32L4 24Q6 14 14 12Z" fill="#8f9498" /><path d="M10 40Q-2 38 1 26Q5 16 15 18Q26 14 31 24L38 40Z" fill="#e6e8ea" />
              <circle cx="44" cy="36" r="17" fill="#fff" /><circle cx="44" cy="36" r="14" fill="none" stroke="#1e6fc0" strokeWidth="2.500" /><path d="M36 34Q44 24 51 32M52 38Q44 48 37 40" fill="none" stroke="#1e6fc0" strokeWidth="4" />
            </svg>
          </TrayIcon>
          <Stack $w={44} $align="center"><Text>ENG</Text><Text $ls={0.4}>IN</Text></Stack>
          <TrayIcon $w={30} $left={15}>
            <svg width="20" height="15" viewBox="0 0 20 15" {...stroke} strokeWidth="1.500"><path d="M.8 5.500Q10 -3.300 19.200 5.500M3.800 8.300Q10 2.200 16.200 8.300M6.500 10.900Q10 7.500 13.500 10.900" /><circle cx="10" cy="13" r="1.300" fill="#fff" /></svg>
          </TrayIcon>
          <TrayIcon $w={30}>
            <svg width="20" height="17" viewBox="0 0 20 17" {...stroke} strokeWidth="1.500"><path d="M1 5.500H4.500L8.500 1.500V15L4.500 11.200H1Z" strokeLinejoin="round" /><path d="M11 5.500Q13.300 8.300 11 11.200M13.500 3.300Q17.500 8.300 13.500 13.500" /><path d="M16 1Q22 8.300 16 16" stroke="#5b6770" /></svg>
          </TrayIcon>
          <TrayIcon $w={40}>
            <svg width="20" height="14" viewBox="0 0 20 14" {...stroke} strokeWidth="1.600"><rect x=".8" y="1" width="16" height="12" rx="3" /><rect x="3.200" y="3.500" width="4.500" height="7" fill="#fff" stroke="none" /><path d="M18.800 5V9" strokeWidth="2.200" /></svg>
          </TrayIcon>
          <Stack $w={78.5} $align="flex-end"><Text>22:13</Text><Text $ls={0.23}>14-05-2024</Text></Stack>
          <TrayIcon $w={16} $left={11}>
            <svg width="16" height="20" viewBox="0 0 16 20" fill="#67fbdc"><path d="M8 0Q14 0 14 7V11L16 15.500H0L2 11V7Q2 0 8 0ZM5 17H11Q10.500 19.500 8 19.500Q5.500 19.500 5 17Z" /></svg>
          </TrayIcon>
        </Tray>
      </Taskbar>
    </Screen>
  );
}
